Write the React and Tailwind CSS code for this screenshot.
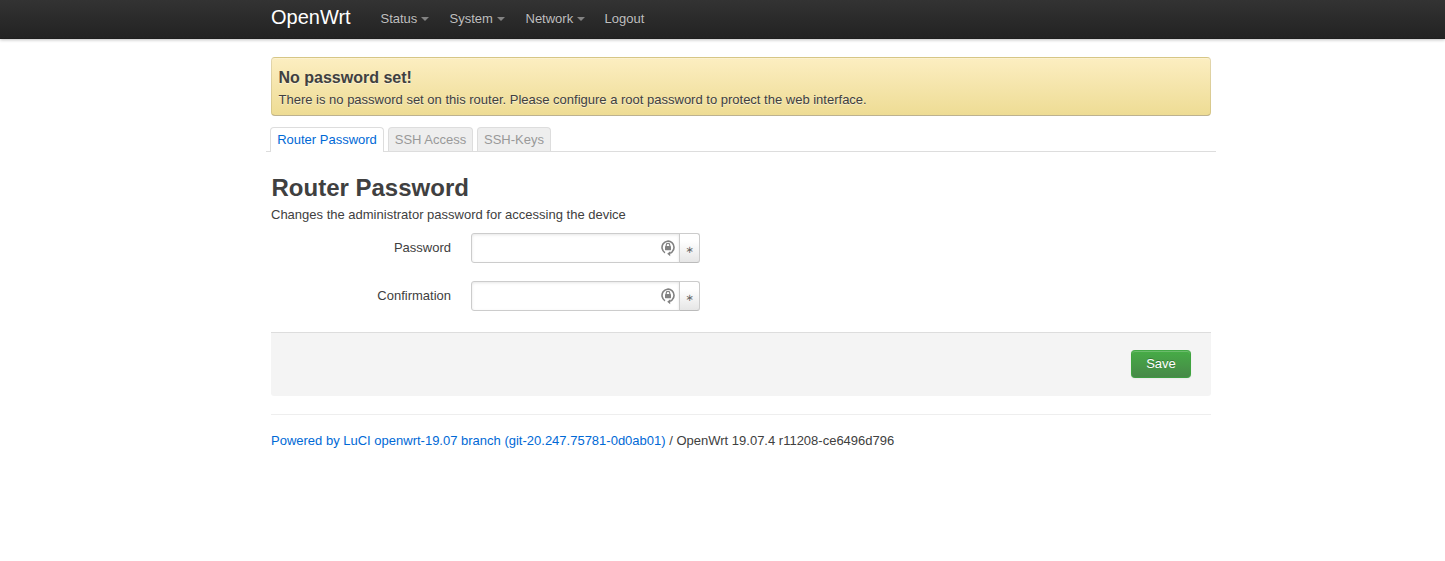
import React from "react";

function NavItem({ label, caret, className }) {
  return (
    <a className={`flex items-center text-[#bfbfbf] [text-shadow:0_-1px_0_rgba(0,0,0,0.25)] ${className}`}>
      <span className="whitespace-nowrap">{label}</span>
      {caret && (
        <span className="ml-1 mt-px h-0 w-0 border-x-4 border-t-4 border-x-transparent border-t-[#828282]" />
      )}
    </a>
  );
}

function LockIcon() {
  return (
    <svg width="14" height="18" viewBox="0 0 14 18" fill="none">
      <path d="M4 13.7A6 6.2 0 1 1 11.2 12.8L9.2 14.4" stroke="#828282" strokeWidth="1.6" />
      <path d="M6.2 14.7L9.2 12.2V17.2Z" fill="#828282" />
      <path d="M5.2 7.6V6.2a1.8 1.8 0 0 1 3.6 0v1.4" stroke="#828282" strokeWidth="1.2" />
      <rect x="4" y="7" width="6" height="4.2" rx="0.4" fill="#828282" />
    </svg>
  );
}

function PasswordField({ label, className }) {
  return (
    <div className={`flex h-[30px] ${className}`}>
      <label className="w-[180px] pt-[6px] text-right">{label}</label>
      <div className="ml-5 flex h-[30px] w-[209px] items-center justify-end rounded-l-[3px] border border-[#ccc] bg-white pr-[4px] shadow-[inset_0_1px_3px_rgba(0,0,0,0.1)]">
        <LockIcon />
      </div>
      <button className="-ml-px flex h-[30px] w-[21px] items-center justify-center rounded-r-[3px] border border-[#ccc] border-b-[#bbb] bg-linear-to-b from-white from-25% to-[#e6e6e6] pt-[3px] font-['DejaVu_Sans',sans-serif] text-[10px] text-[#666]">
        ∗
      </button>
    </div>
  );
}

export default function App() {
  return (
    <div className="h-[561px] overflow-hidden bg-white font-['Liberation_Sans',Arial,sans-serif] text-[13px] leading-[18px] text-[#404040]">
      <header className="h-[39px] bg-linear-to-b from-[#333] to-[#222] shadow-[0_1px_3px_rgba(0,0,0,0.25),inset_0_-1px_0_rgba(0,0,0,0.1)]">
        <div className="ml-[271px] flex h-[37px] w-[940px] items-center">
          <a className="w-[109.5px] pb-[3px] text-[20px] leading-5 text-white">OpenWrt</a>
          <NavItem label="Status" caret className="w-[69px]" />
          <NavItem label="System" caret className="w-[76px]" />
          <NavItem label="Network" caret className="w-[79px]" />
          <NavItem label="Logout" className="" />
        </div>
      </header>

      <main className="ml-[271px] w-[940px]">
        <section className="mt-[18px] h-[59px] rounded-[4px] border border-black/10 border-b-black/25 bg-linear-to-b from-[#fceec1] to-[#eedc94] px-[6.5px] pt-[7px] shadow-[inset_0_1px_0_rgba(255,255,255,0.25)] [text-shadow:0_1px_0_rgba(255,255,255,0.5)]">
          <h4 className="text-[16px] leading-[26px] font-bold">No password set!</h4>
          <p className="leading-[18px]">
            There is no password set on this router. Please configure a root password to protect the web interface.
          </p>
        </section>

        <ul className="-mx-[5px] mt-[11px] flex h-[25px] gap-1 border-b border-[#ddd] pl-1">
          <li className="h-[25px] w-[114px] rounded-t-[4px] border border-b-0 border-[#ddd] bg-white pt-[3px] text-center text-[#0069d6]">
            Router Password
          </li>
          <li className="h-6 w-[85px] rounded-t-[4px] border border-b-0 border-[#ddd] bg-[#eee] pt-[3px] text-center text-[#999]">
            SSH Access
          </li>
          <li className="h-6 w-[74px] rounded-t-[4px] border border-b-0 border-[#ddd] bg-[#eee] pt-[3px] text-center text-[#999]">
            SSH-Keys
          </li>
        </ul>

        <h2 className="mt-[18px] pl-[0.5px] text-[24px] leading-[36px] font-bold">Router Password</h2>
        <p>Changes the administrator password for accessing the device</p>
        <PasswordField label="Password" className="mt-[9px]" />
        <PasswordField label="Confirmation" className="mt-[18px]" />

        <div className="mt-[21px] flex h-[64px] justify-end rounded-b-[3px] border-t border-[#ddd] bg-[#f4f4f4] pt-[17px] pr-5">
          <button className="flex h-7 w-[60px] items-center justify-center rounded-[4px] border border-[#3fa33f] border-t-[#44a947] border-b-[#3d9b40] bg-linear-to-b from-[#46ac46] to-[#468847] text-[13px] text-white shadow-[inset_0_1px_0_rgba(255,255,255,0.2),0_1px_2px_rgba(0,0,0,0.05)] [text-shadow:0_-1px_0_rgba(0,0,0,0.25)]">
            Save
          </button>
        </div>

        <footer className="mt-[18px] border-t border-[#eee] pt-[17px]">
          <a className="text-[#0069d6]">Powered by LuCI openwrt-19.07 branch (git-20.247.75781-0d0ab01)</a>
          {" / OpenWrt 19.07.4 r11208-ce6496d796"}
        </footer>
      </main>
    </div>
  );
}
